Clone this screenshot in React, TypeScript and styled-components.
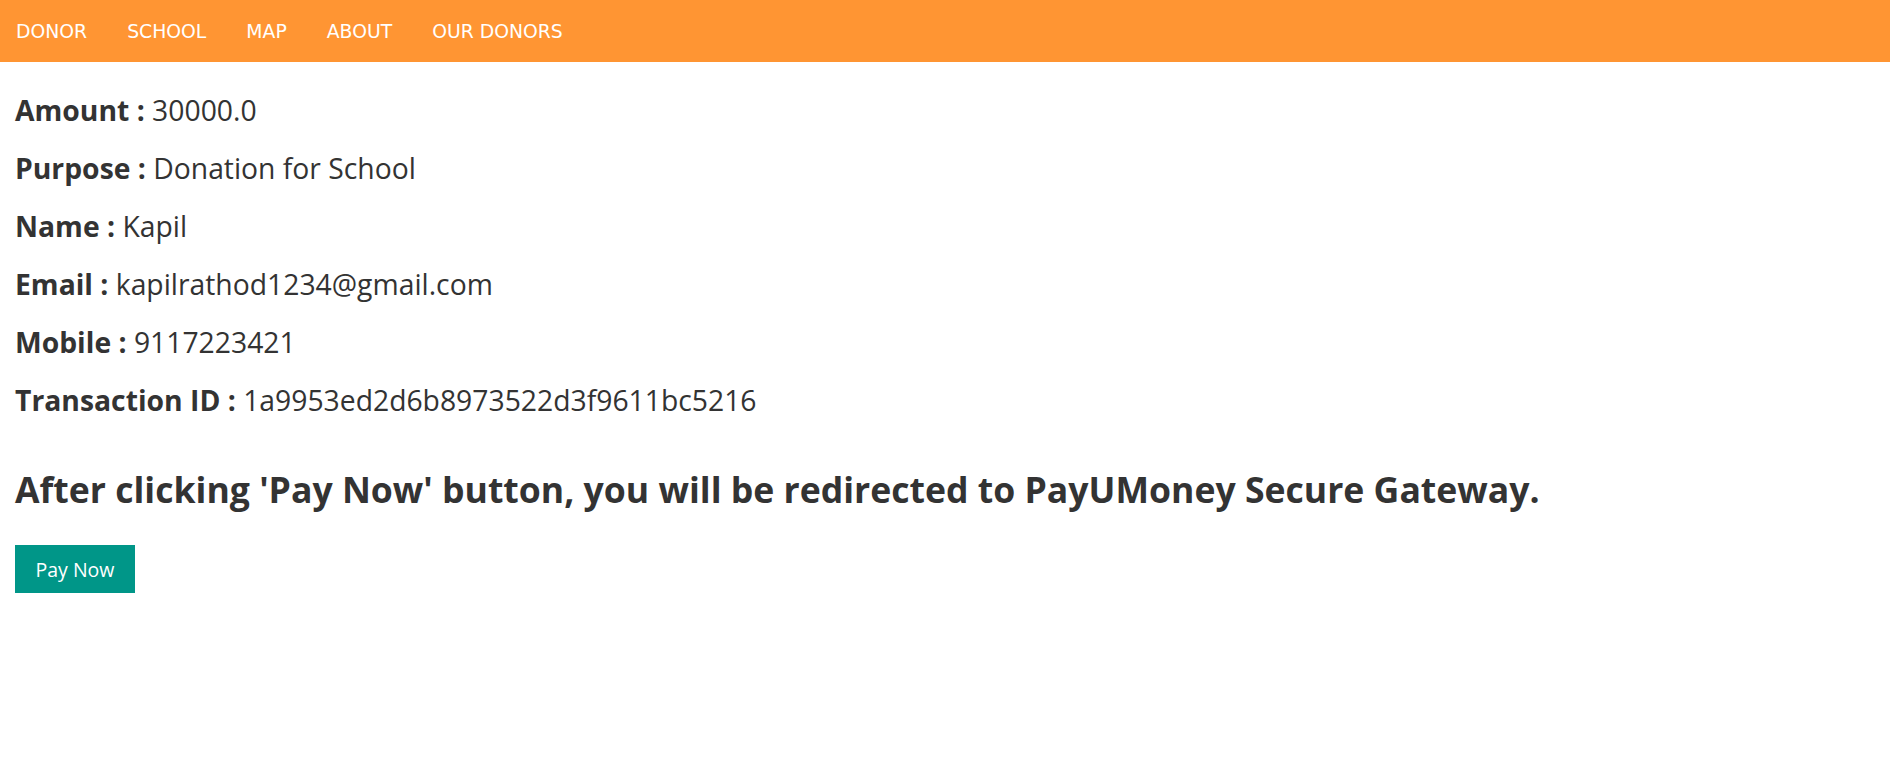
import React from "react";
import styled, { createGlobalStyle } from "styled-components";

const GlobalStyle = createGlobalStyle`
  html, body { margin: 0; padding: 0; background: #ffffff; }
  body { font-family: "Open Sans", "Noto Sans", sans-serif; color: #333333; }
  * { box-sizing: border-box; }
`;

const NavBar = styled.nav`
  height: 62px;
  background: #ff9533;
  display: flex;
  align-items: center;
  padding-left: 16px;
  gap: 40px;
`;

const NavLink = styled.a`
  font-family: "DejaVu Sans", Verdana, sans-serif;
  font-size: 18.8px;
  color: #ffffff;
  text-decoration: none;
  white-space: nowrap;
`;

const Content = styled.main`
  padding: 19px 15px 0;
  display: flex;
  flex-direction: column;
  align-items: flex-start;
`;

const Row = styled.p`
  margin: 0;
  font-size: 28.3px;
  line-height: 58px;
  color: #333333;
`;

const Label = styled.b`
  font-weight: 700;
`;

const Heading = styled.h2`
  margin: 30px 0 0;
  font-size: 35.6px;
  line-height: 60px;
  font-weight: 700;
  color: #333333;
`;

const PayButton = styled.button`
  margin-top: 26px;
  height: 48px;
  padding: 0 20.5px;
  border: none;
  background: #009688;
  color: #ffffff;
  font-family: "Open Sans", sans-serif;
  font-size: 19.5px;
  cursor: pointer;
`;

const rows: [string, string][] = [
  ["Amount", "30000.0"],
  ["Purpose", "Donation for School"],
  ["Name", "Kapil"],
  ["Email", "kapilrathod1234@gmail.com"],
  ["Mobile", "9117223421"],
  ["Transaction ID", "1a9953ed2d6b8973522d3f9611bc5216"],
];

export default function App() {
  return (
    <>
      <GlobalStyle />
      <NavBar>
        {["DONOR", "SCHOOL", "MAP", "ABOUT", "OUR DONORS"].map((n) => (
          <NavLink key={n} href="#">
            {n}
          </NavLink>
        ))}
      </NavBar>
      <Content>
        {rows.map(([k, v]) => (
          <Row key={k}>
            <Label>{k} : </Label>
            {v}
          </Row>
        ))}
        <Heading>
          After clicking 'Pay Now' button, you will be redirected to PayUMoney Secure Gateway.
        </Heading>
        <PayButton>Pay Now</PayButton>
      </Content>
    </>
  );
}
